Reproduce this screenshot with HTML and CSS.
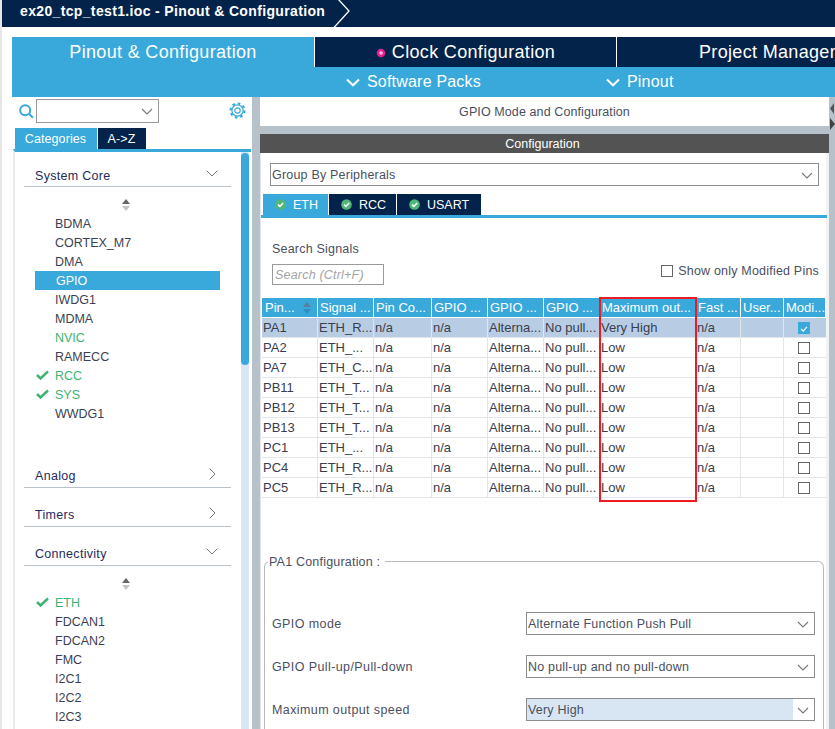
FILE: index.html
```html
<!DOCTYPE html>
<html lang="en">
<head>
<meta charset="utf-8">
<title>Pinout &amp; Configuration</title>
<link rel="stylesheet" href="styles.css">
</head>
<body>
<header class="crumb">
  <span class="crumb-title">ex20_tcp_test1.ioc - Pinout &amp; Configuration</span>
  <svg class="crumb-arrow" width="18" height="27" viewBox="0 0 18 27"><path d="M5 -1 L16 11 L1 27.5" fill="none" stroke="#fff" stroke-width="1.3"/></svg>
</header>
<nav class="main-tabs">
  <div class="main-tab active">Pinout &amp; Configuration</div>
  <div class="main-tab clock"><svg class="dot" width="10" height="10" viewBox="0 0 10 10"><circle cx="5" cy="5" r="4.3" fill="#e6218c"/><circle cx="5" cy="5" r="1.8" fill="#fbe"/></svg>Clock Configuration</div>
  <div class="main-tab project">Project Manager</div>
</nav>
<div class="sub-bar">
  <span class="sub-item packs"><svg width="14" height="9" viewBox="0 0 14 9"><path d="M1 1.5 L7 7.3 L13 1.5" fill="none" stroke="#fff" stroke-width="2"/></svg>Software Packs</span>
  <span class="sub-item pinout"><svg width="14" height="9" viewBox="0 0 14 9"><path d="M1 1.5 L7 7.3 L13 1.5" fill="none" stroke="#fff" stroke-width="2"/></svg>Pinout</span>
</div>
<main class="workspace">
  <aside class="side">
    <div class="side-tools">
      <svg class="search-icon" width="15" height="15" viewBox="0 0 15 15"><circle cx="6.2" cy="6.2" r="5" fill="none" stroke="#39a9dc" stroke-width="2"/><path d="M9.8 9.8 L14 13.8" stroke="#39a9dc" stroke-width="2"/></svg>
      <div class="combo"><svg width="12" height="7" viewBox="0 0 12 7"><path d="M1 1 L6 6 L11 1" fill="none" stroke="#777" stroke-width="1.1"/></svg></div>
      <svg class="gear" width="17" height="17" viewBox="0 0 17 17"><circle cx="8.5" cy="8.5" r="2.7" fill="none" stroke="#39a9dc" stroke-width="1.2"/><circle cx="8.5" cy="8.5" r="5.6" fill="none" stroke="#39a9dc" stroke-width="1.2"/><circle cx="8.5" cy="8.5" r="7" fill="none" stroke="#39a9dc" stroke-width="2.2" stroke-dasharray="2.6 2.9"/></svg>
    </div>
    <div class="side-tabs">
      <div class="side-tab active">Categories</div>
      <div class="side-tab">A-&gt;Z</div>
    </div>
    <div class="side-body">
      <div class="tree">
        <div class="group first">System Core<svg class="chev down" width="12" height="7" viewBox="0 0 12 7"><path d="M.7 .7 L6 6 L11.3 .7" fill="none" stroke="#777" stroke-width="1"/></svg></div>
        <div class="sorter"><svg width="8" height="12" viewBox="0 0 8 12"><path d="M4 0 L8 5 L0 5Z" fill="#666"/><path d="M4 12 L8 7 L0 7Z" fill="#c4c4c4"/></svg></div>
        <ul class="items">
          <li>BDMA</li>
          <li>CORTEX_M7</li>
          <li>DMA</li>
          <li class="selected">GPIO</li>
          <li>IWDG1</li>
          <li>MDMA</li>
          <li class="ok">NVIC</li>
          <li>RAMECC</li>
          <li class="ok"><svg class="tick" width="13" height="10" viewBox="0 0 13 10"><path d="M1 5 L4.6 8.4 L12 1.4" fill="none" stroke="#3cb371" stroke-width="2.6"/></svg>RCC</li>
          <li class="ok"><svg class="tick" width="13" height="10" viewBox="0 0 13 10"><path d="M1 5 L4.6 8.4 L12 1.4" fill="none" stroke="#3cb371" stroke-width="2.6"/></svg>SYS</li>
          <li>WWDG1</li>
        </ul>
        <div class="group">Analog<svg class="chev right" width="7" height="12" viewBox="0 0 7 12"><path d="M.7 .7 L6 6 L.7 11.3" fill="none" stroke="#777" stroke-width="1"/></svg></div>
        <div class="group">Timers<svg class="chev right" width="7" height="12" viewBox="0 0 7 12"><path d="M.7 .7 L6 6 L.7 11.3" fill="none" stroke="#777" stroke-width="1"/></svg></div>
        <div class="group">Connectivity<svg class="chev down" width="12" height="7" viewBox="0 0 12 7"><path d="M.7 .7 L6 6 L11.3 .7" fill="none" stroke="#777" stroke-width="1"/></svg></div>
        <div class="sorter"><svg width="8" height="12" viewBox="0 0 8 12"><path d="M4 0 L8 5 L0 5Z" fill="#666"/><path d="M4 12 L8 7 L0 7Z" fill="#c4c4c4"/></svg></div>
        <ul class="items">
          <li class="ok"><svg class="tick" width="13" height="10" viewBox="0 0 13 10"><path d="M1 5 L4.6 8.4 L12 1.4" fill="none" stroke="#3cb371" stroke-width="2.6"/></svg>ETH</li>
          <li>FDCAN1</li>
          <li>FDCAN2</li>
          <li>FMC</li>
          <li>I2C1</li>
          <li>I2C2</li>
          <li>I2C3</li>
        </ul>
      </div>
      <div class="scroll-track"><div class="scroll-thumb"></div></div>
    </div>
  </aside>
  <section class="panel">
    <div class="panel-title">GPIO Mode and Configuration</div>
    <div class="config-head">Configuration</div>
    <div class="config-body">
      <div class="select group-select">Group By Peripherals<svg width="12" height="7" viewBox="0 0 12 7"><path d="M1 1 L6 6 L11 1" fill="none" stroke="#777" stroke-width="1.1"/></svg></div>
      <div class="periph-tabs">
        <div class="periph-tab active eth"><svg width="11" height="11" viewBox="0 0 11 11"><circle cx="5.5" cy="5.5" r="5.3" fill="#4fb878"/><path d="M3 5.6 L4.9 7.4 L8.1 3.9" fill="none" stroke="#fff" stroke-width="1.5"/></svg>ETH</div>
        <div class="periph-tab rcc"><svg width="11" height="11" viewBox="0 0 11 11"><circle cx="5.5" cy="5.5" r="5.3" fill="#4fb878"/><path d="M3 5.6 L4.9 7.4 L8.1 3.9" fill="none" stroke="#fff" stroke-width="1.5"/></svg>RCC</div>
        <div class="periph-tab usart"><svg width="11" height="11" viewBox="0 0 11 11"><circle cx="5.5" cy="5.5" r="5.3" fill="#4fb878"/><path d="M3 5.6 L4.9 7.4 L8.1 3.9" fill="none" stroke="#fff" stroke-width="1.5"/></svg>USART</div>
      </div>
      <div class="search-row">
        <div class="search-col">
          <div class="search-label">Search Signals</div>
          <div class="search-input">Search (Ctrl+F)</div>
        </div>
        <label class="only-mod"><span class="box"></span>Show only Modified Pins</label>
      </div>
      <div class="table-wrap">
        <div class="grid head">
          <div class="sorted">Pin...<svg width="8" height="12" viewBox="0 0 8 12"><path d="M4 0 L8 5 L0 5Z" fill="#5a7f99"/><path d="M4 12 L8 7 L0 7Z" fill="#2f8fc0"/></svg></div>
          <div>Signal ...</div><div>Pin Co...</div><div>GPIO ...</div><div>GPIO ...</div><div>GPIO ...</div><div>Maximum out...</div><div>Fast ...</div><div>User...</div><div>Modi...</div>
        </div>
        <div class="grid row current"><div>PA1</div><div>ETH_R...</div><div>n/a</div><div>n/a</div><div>Alterna...</div><div>No pull...</div><div>Very High</div><div>n/a</div><div></div><div class="check-cell"><span class="box on"><svg width="12" height="12" viewBox="0 0 12 12"><path d="M2.5 6 L5 8.5 L9.5 3.5" fill="none" stroke="#fff" stroke-width="1.4"/></svg></span></div></div>
        <div class="grid row"><div>PA2</div><div>ETH_...</div><div>n/a</div><div>n/a</div><div>Alterna...</div><div>No pull...</div><div>Low</div><div>n/a</div><div></div><div class="check-cell"><span class="box"></span></div></div>
        <div class="grid row"><div>PA7</div><div>ETH_C...</div><div>n/a</div><div>n/a</div><div>Alterna...</div><div>No pull...</div><div>Low</div><div>n/a</div><div></div><div class="check-cell"><span class="box"></span></div></div>
        <div class="grid row"><div>PB11</div><div>ETH_T...</div><div>n/a</div><div>n/a</div><div>Alterna...</div><div>No pull...</div><div>Low</div><div>n/a</div><div></div><div class="check-cell"><span class="box"></span></div></div>
        <div class="grid row"><div>PB12</div><div>ETH_T...</div><div>n/a</div><div>n/a</div><div>Alterna...</div><div>No pull...</div><div>Low</div><div>n/a</div><div></div><div class="check-cell"><span class="box"></span></div></div>
        <div class="grid row"><div>PB13</div><div>ETH_T...</div><div>n/a</div><div>n/a</div><div>Alterna...</div><div>No pull...</div><div>Low</div><div>n/a</div><div></div><div class="check-cell"><span class="box"></span></div></div>
        <div class="grid row"><div>PC1</div><div>ETH_...</div><div>n/a</div><div>n/a</div><div>Alterna...</div><div>No pull...</div><div>Low</div><div>n/a</div><div></div><div class="check-cell"><span class="box"></span></div></div>
        <div class="grid row"><div>PC4</div><div>ETH_R...</div><div>n/a</div><div>n/a</div><div>Alterna...</div><div>No pull...</div><div>Low</div><div>n/a</div><div></div><div class="check-cell"><span class="box"></span></div></div>
        <div class="grid row"><div>PC5</div><div>ETH_R...</div><div>n/a</div><div>n/a</div><div>Alterna...</div><div>No pull...</div><div>Low</div><div>n/a</div><div></div><div class="check-cell"><span class="box"></span></div></div>
        <div class="red-box"></div>
      </div>
      <div class="pin-config">
        <div class="legend">PA1 Configuration :</div>
        <div class="field"><span>GPIO mode</span><div class="select">Alternate Function Push Pull<svg width="12" height="7" viewBox="0 0 12 7"><path d="M1 1 L6 6 L11 1" fill="none" stroke="#777" stroke-width="1.1"/></svg></div></div>
        <div class="field"><span>GPIO Pull-up/Pull-down</span><div class="select">No pull-up and no pull-down<svg width="12" height="7" viewBox="0 0 12 7"><path d="M1 1 L6 6 L11 1" fill="none" stroke="#777" stroke-width="1.1"/></svg></div></div>
        <div class="field"><span>Maximum output speed</span><div class="select filled"><em>Very High</em><svg width="12" height="7" viewBox="0 0 12 7"><path d="M1 1 L6 6 L11 1" fill="none" stroke="#777" stroke-width="1.1"/></svg></div></div>
      </div>
    </div>
  </section>
  <div class="edge">
    <svg width="6" height="40" viewBox="0 0 6 40"><path d="M5 2 L1 7.5 L5 13Z" fill="#555"/><path d="M1 17 L6 23 L1 29Z" fill="#444"/></svg>
  </div>
</main>
</body>
</html>
```
FILE: styles.css
```css
* { box-sizing: border-box; }
html, body { margin: 0; height: 729px; overflow: hidden; background: #fff; }
body { font-family: "Liberation Sans", Arial, sans-serif; font-size: 12.5px; color: #3b3f52; border-left: 2px solid #e6e6e6; }

.crumb { height: 27px; background: #03234b; display: flex; align-items: center; padding-left: 18px; color: #fff; }
.crumb-title { font-weight: bold; font-size: 14px; letter-spacing: .35px; white-space: nowrap; padding-bottom: 6px; }
.crumb-arrow { margin-left: 8px; flex: none; }

.main-tabs { display: flex; height: 30px; margin: 10px 0 0 10px; }
.main-tab { display: flex; align-items: center; justify-content: center; height: 30px; padding-top: 1px; color: #fff; font-size: 18px; letter-spacing: .33px; background: #03234b; white-space: nowrap; }
.main-tab.active { width: 303px; background: #39a9dc; border-right: 1px solid #fff; }
.main-tab.clock { width: 302px; border-right: 1px solid #fff; }
.main-tab.clock .dot { margin-right: 6px; }
.main-tab.project { flex: 1; justify-content: flex-start; padding-left: 82px; overflow: hidden; }

.sub-bar { height: 30px; margin-left: 10px; background: #39a9dc; color: #fff; font-size: 16px; letter-spacing: .2px; display: flex; align-items: center; padding-left: 334px; }
.sub-item { display: flex; align-items: center; gap: 7px; }
.sub-item.pinout { margin-left: 125px; }

.workspace { display: flex; height: 632px; margin-left: 10px; background: linear-gradient(#b6c1c9, #b6c1c9) 240px 0 / 8px 100% no-repeat; }

.side { width: 240px; flex: none; overflow: hidden; }
.side-tools { display: flex; align-items: flex-start; height: 31px; padding: 2px 0 0 7px; }
.search-icon { margin: 5px 2px 0 0; }
.combo { width: 123px; height: 24px; border: 1px solid #9a9a9a; display: flex; align-items: center; justify-content: flex-end; padding-right: 5px; }
.gear { margin: 3px 0 0 70px; }
.side-tabs { display: flex; height: 21px; margin-left: 3px; gap: 1px; }
.side-tab { background: #03234b; color: #fff; width: 48px; display: flex; align-items: center; justify-content: center; padding-right: 1px; font-size: 12.5px; letter-spacing: .1px; }
.side-tab.active { background: #39a9dc; width: 82px; }
.side-body { display: flex; height: 580px; border-top: 3px solid #39a9dc; margin: 0 1px; border-left: 2px solid #e8ebee; }
.tree { width: 226px; flex: none; padding-left: 9px; overflow: hidden; }
.scroll-track { width: 8px; background: #d8e6f3; }
.scroll-thumb { height: 212px; background: #39a9dc; border-radius: 4px; margin-top: 1px; }

.group { position: relative; height: 39px; width: 207px; border-bottom: 1px solid #b6c1c9; padding: 19px 0 0 11px; line-height: 16px; color: #1f2a5c; letter-spacing: .3px; }
.group.first { height: 35px; padding-top: 16px; }
.chev { position: absolute; }
.chev.right { right: 15px; top: 19px; }
.chev.down { right: 13px; top: 21px; }
.group.first .chev.down { top: 18px; }
.sorter { height: 24px; padding-left: 98px; display: flex; align-items: flex-end; }
.items { list-style: none; margin: 0; padding: 3px 0 0; }
.items li { position: relative; height: 19px; line-height: 20px; margin-left: 11px; width: 185px; padding-left: 20px; white-space: nowrap; }
.items li.ok { color: #3cb371; }
.items li.selected { background: #39a9dc; color: #fff; padding-left: 21px; }
.tick { position: absolute; left: 1px; top: 4px; }
.items + .group { margin-top: 26px; }

.panel { width: 569px; flex: none; margin-left: 8px; }
.panel-title { height: 29px; line-height: 31px; text-align: center; font-size: 12.5px; color: #4a4f60; letter-spacing: .1px; }
.config-head { margin-top: 8px; height: 19px; line-height: 20px; padding-right: 4px; background: #535353; color: #fff; text-align: center; font-size: 12.5px; box-shadow: 0 -8px 0 #b6c1c9; }
.config-body { background: #fff; height: 576px; padding: 10px 0 0 1px; border-left: 1px solid #e4e8ec; border-right: 3px solid #f0f2f4; }

.select { position: relative; height: 23px; border: 1px solid #8d8d8d; display: flex; align-items: center; padding-left: 1px; color: #4a4f60; letter-spacing: .2px; white-space: nowrap; }
.select svg { position: absolute; right: 5px; top: 8px; }
.group-select { width: 549px; margin-left: 8px; }
.select.filled { padding-left: 0; }
.select.filled em { font-style: normal; display: flex; align-items: center; padding-left: 1px; background: #d8e6f3; width: 266px; height: 100%; }

.periph-tabs { display: flex; gap: 1px; height: 24px; margin: 8px 0 0 -1px; border-bottom: 3px solid #39a9dc; width: 566px; padding-left: 2px; }
.periph-tab { display: flex; align-items: center; gap: 7px; height: 21px; background: #03234b; color: #fff; padding-left: 12px; }
.periph-tab.active { background: #39a9dc; }
.periph-tab.eth { width: 65px; }
.periph-tab.rcc { width: 67px; }
.periph-tab.usart { width: 84px; }

.search-row { display: flex; justify-content: space-between; align-items: flex-end; width: 548px; margin-left: 10px; height: 67px; }
.search-label { height: 15px; line-height: 15px; color: #4a4f60; letter-spacing: .2px; }
.search-input { margin-top: 7px; width: 112px; height: 21px; border: 1px solid #9a9a9a; font-style: italic; color: #a4a4a4; line-height: 20px; padding-left: 2px; letter-spacing: .2px; }
.only-mod { display: flex; align-items: center; gap: 5px; color: #4a4f60; padding-bottom: 7px; letter-spacing: .2px; margin-right: 1px; }
.box { display: inline-block; width: 12px; height: 12px; border: 1px solid #666; background: #fff; }
.box.on { background: #39a9dc; border-color: #39a9dc; display: flex; }

.table-wrap { position: relative; margin-top: 13px; width: 564px; font-size: 13px; }
.grid { display: grid; grid-template-columns: 56px 56px 58px 56px 56px 56px 96px 45px 43px 42px; }
.grid > div { overflow: hidden; white-space: nowrap; }
.grid.head { height: 20px; }
.grid.head > div { height: 19px; background: #39a9dc; color: #fff; line-height: 19px; margin-right: 1px; padding-left: 2px; }
.grid.head > div.sorted { display: flex; align-items: center; justify-content: space-between; padding-right: 6px; padding-left: 3px; }
.grid.row { height: 20px; border-bottom: 1px solid #e2e6ea; }
.grid.row > div { line-height: 20px; padding-left: 1px; border-right: 1px solid #e2e6ea; color: #3a3d4d; }
.grid.row > div:last-child { border-right: 0; }
.grid.current { background: #b8cde4; }
.grid.row > .check-cell { display: flex; align-items: center; justify-content: center; padding: 0 2px 0 0; }
.red-box { position: absolute; left: 337px; top: -1px; width: 98px; height: 205px; border: 2px solid #ed1c24; }

.pin-config { position: relative; margin: 63px 0 0 2px; width: 560px; height: 168px; border: 1px solid #b6bcc2; border-bottom: 0; border-radius: 6px 6px 0 0; padding: 50px 8px 0 7px; }
.legend { position: absolute; left: 3px; top: -10px; height: 18px; line-height: 20px; padding: 0 5px 0 1px; background: #fff; color: #4a4f60; letter-spacing: .2px; }
.field { display: flex; align-items: center; justify-content: space-between; height: 23px; margin-bottom: 20px; color: #4a4f60; letter-spacing: .4px; }
.field .select { width: 289px; }

.edge { flex: 1; background: #b6c1c9; padding-top: 4px; overflow: hidden; }
.edge svg { display: block; }
```
